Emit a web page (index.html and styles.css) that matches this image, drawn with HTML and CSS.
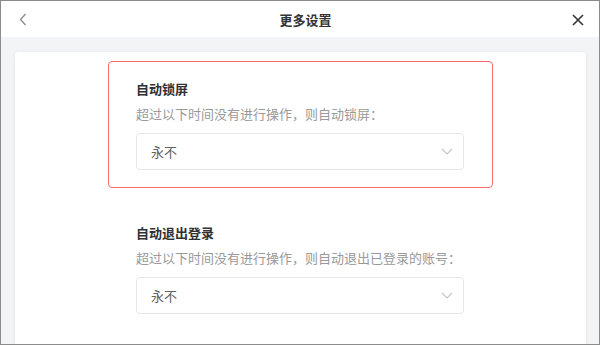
FILE: index.html
```html
<!DOCTYPE html>
<html lang="zh-CN">
<head>
    <meta charset="UTF-8">
    <title>更多设置</title>
    <link rel="stylesheet" href="styles.css">
</head>
<body>
<div class="window">
    <div class="header">
        <span class="back">
            <svg width="8" height="13" viewBox="0 0 8 13"><path d="M6.5 1 L1.5 6.5 L6.5 12" fill="none" stroke="#8a8a8a" stroke-width="1.3"/></svg>
        </span>
        <span class="title">更多设置</span>
        <span class="close">
            <svg width="12" height="12" viewBox="0 0 12 12"><path d="M1 1 L11 11 M11 1 L1 11" fill="none" stroke="#333" stroke-width="1.6"/></svg>
        </span>
    </div>

    <div class="main">
        <div class="card">
            <div class="panel">
                <div class="section highlight">
                    <div class="label">自动锁屏</div>
                    <div class="hint">超过以下时间没有进行操作，则自动锁屏：</div>
                    <div class="select">
                        <span>永不</span>
                        <svg width="12" height="7" viewBox="0 0 12 7"><path d="M1 1 L6 6 L11 1" fill="none" stroke="#c0c4cc" stroke-width="1.2"/></svg>
                    </div>
                </div>

                <div class="section">
                    <div class="label">自动退出登录</div>
                    <div class="hint">超过以下时间没有进行操作，则自动退出已登录的账号：</div>
                    <div class="select">
                        <span>永不</span>
                        <svg width="12" height="7" viewBox="0 0 12 7"><path d="M1 1 L6 6 L11 1" fill="none" stroke="#c0c4cc" stroke-width="1.2"/></svg>
                    </div>
                </div>
            </div>
        </div>
    </div>
</div>
</body>
</html>
```

FILE: styles.css
```css
body {
    margin: 0;
    font-family: "Noto Sans CJK SC", "Noto Sans", sans-serif;
    font-size: 13px;
    color: #333;
}
.window {
    width: 600px;
    height: 345px;
    box-sizing: border-box;
    border: 1px solid #8c8c8c;
    background-color: #f3f4f6;
    overflow: hidden;
    display: flex;
    flex-direction: column;
}
.header {
    height: 36px;
    flex-shrink: 0;
    background-color: #fff;
    display: flex;
    align-items: center;
    justify-content: space-between;
    padding: 0 15px 0 18px;
}
.header .title {
    font-size: 13px;
    font-weight: bold;
    color: #333;
    margin-left: 8px;
}
.back, .close {
    display: flex;
    align-items: center;
    width: 12px;
}
.back svg {
    margin-top: 1px;
}
.close svg {
    margin-top: 1px;
}
.main {
    flex: 1;
    padding: 15px 13px 0 14px;
}
.card {
    height: 320px;
    background-color: #fff;
    border-radius: 4px;
    box-shadow: 0 1px 4px rgba(0, 0, 0, 0.08);
    padding-top: 14px;
    box-sizing: border-box;
}
.panel {
    margin-left: 60px;
    width: 456px;
    height: 256px;
    box-sizing: border-box;
    border: 1px solid transparent;
    border-radius: 8px;
    padding: 12px 0 0 60px;
}
.section {
    position: relative;
    width: 328px;
}
.section + .section {
    margin-top: 53px;
}
.label {
    font-weight: bold;
    line-height: 20px;
    color: #303133;
}
.hint {
    margin-top: 5px;
    line-height: 20px;
    color: #999;
}
.select {
    margin-top: 9px;
    height: 37px;
    box-sizing: border-box;
    border: 1px solid #e4e7ed;
    border-radius: 4px;
    padding: 0 10px 0 14px;
    display: flex;
    align-items: center;
    justify-content: space-between;
    color: #606266;
}
.highlight::before {
    content: "";
    position: absolute;
    top: -18px;
    left: -28px;
    right: -29px;
    bottom: -18px;
    border: 1.5px solid #ff6b6b;
    border-radius: 4px;
}
```
